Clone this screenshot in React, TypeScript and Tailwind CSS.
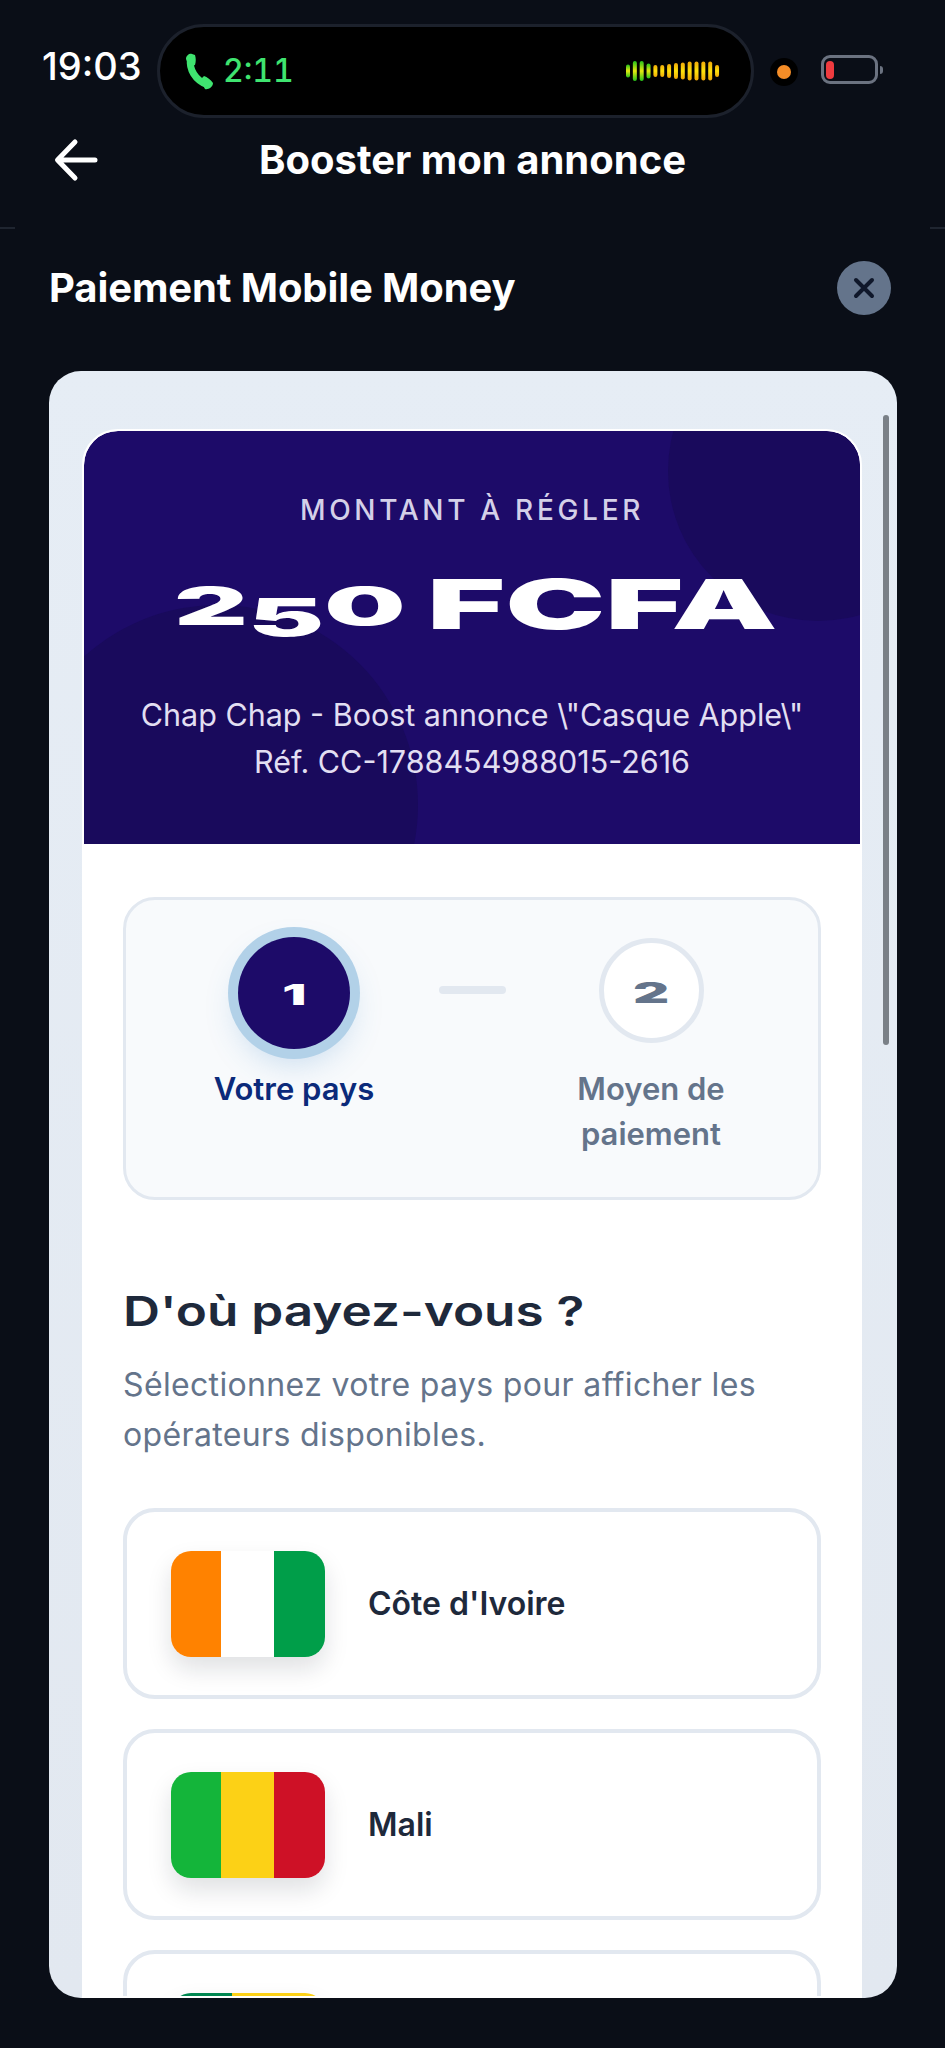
import React from "react";

const bars: [number, boolean][] = [
  [13, true], [20, true], [20, true], [15, true], [12, false], [12, false], [14, false],
  [16, false], [17, false], [19, false], [19, false], [19, false], [19, false], [12, false],
];

function Wave() {
  return (
    <svg width="96" height="24" viewBox="0 0 96 24">
      <defs>
        <linearGradient id="wg" x1="0" y1="0" x2="0" y2="1">
          <stop offset="0" stopColor="#22c21a" />
          <stop offset="0.5" stopColor="#e8e810" />
          <stop offset="1" stopColor="#22c21a" />
        </linearGradient>
        <linearGradient id="wy" x1="0" y1="0" x2="0" y2="1">
          <stop offset="0" stopColor="#f0a808" />
          <stop offset="0.5" stopColor="#fde20c" />
          <stop offset="1" stopColor="#f0a808" />
        </linearGradient>
      </defs>
      {bars.map(([h, g], i) => (
        <rect key={i} x={1 + i * 6.85} y={12 - h / 2} width="4" height={h} rx="2" fill={g ? "url(#wg)" : "url(#wy)"} />
      ))}
    </svg>
  );
}

function Flag({ a, b, c }: { a: string; b: string; c: string }) {
  return (
    <div className="flex h-[106px] w-[154px] shrink-0 overflow-hidden rounded-[20px] shadow-[0_12px_24px_rgba(15,23,42,0.13)]">
      <div className={`h-full w-[50px] ${a}`} />
      <div className={`h-full w-[53px] ${b}`} />
      <div className={`h-full w-[51px] ${c}`} />
    </div>
  );
}

function Benin() {
  return (
    <div className="flex h-[106px] w-[154px] shrink-0 overflow-hidden rounded-[20px] shadow-[0_12px_24px_rgba(15,23,42,0.13)]">
      <div className="h-full w-[61px] bg-[#008751]" />
      <div className="flex h-full flex-1 flex-col">
        <div className="h-[53px] bg-[#fcd116]" />
        <div className="h-[53px] bg-[#e8112d]" />
      </div>
    </div>
  );
}

function Country({ name, flag }: { name?: string; flag: React.ReactNode }) {
  return (
    <div className="flex h-[191px] shrink-0 items-center gap-[43px] rounded-[32px] border-[4px] border-[#e2e8f0] bg-white pl-[44px]">
      {flag}
      {name && <span className="text-[32px] font-semibold text-[#1e293b]">{name}</span>}
    </div>
  );
}

export default function App() {
  return (
    <div className="flex h-[2048px] w-[945px] flex-col overflow-hidden bg-[#0a0e17] text-white [font-family:Inter,'Noto_Sans',sans-serif]">
      {/* status */}
      <div className="flex h-[118px] shrink-0 items-end pl-[42px]">
        <span className="mb-[30px] w-[115px] text-[38px] font-medium leading-[44px]">19:03</span>
        <div className="flex h-[94px] w-[597px] items-center justify-between rounded-full border-[3px] border-[#1c212c] bg-black pl-[25px] pr-[30px]">
          <div className="flex items-center gap-[10px]">
            <svg width="28" height="37" viewBox="0 0 28 37">
              <path d="M5.5 6C4 16 10 27 22 31.5" fill="none" stroke="#3fe470" strokeWidth="7" strokeLinecap="round" />
              <path d="M1 6C1 2 5 0 7 1L10 2C11 5 11 9 10 12L4 14ZM15 27L19 23C22 24 26 27 28 30C28 34 23 37 20 36Z" fill="#3fe470" />
            </svg>
            <span className="text-[32px] font-medium leading-none text-[#3fe470] tabular-nums">2:11</span>
          </div>
          <Wave />
        </div>
        <div className="mb-[32px] ml-[16px] flex h-[28px] w-[28px] items-center justify-center rounded-full bg-black">
          <div className="h-[14px] w-[14px] rounded-full bg-[#f58d27]" />
        </div>
        <div className="mb-[34px] ml-[23px] flex items-center">
          <div className="flex h-[29px] w-[57px] items-center rounded-[9px] border-[3px] border-[#6b7280] pl-[2px]">
            <div className="h-[18px] w-[8px] rounded-[4px] bg-[#ef3b3f]" />
          </div>
          <div className="ml-[2px] h-[8px] w-[3px] rounded-r-full bg-[#6b7280]" />
        </div>
      </div>

      {/* header */}
      <div className="relative flex h-[84px] shrink-0 items-center justify-center">
        <svg className="absolute left-[54px] top-[20px]" width="44" height="44" viewBox="0 0 44 44">
          <path d="M41 22H4M21 4L3.5 22L21 40" fill="none" stroke="#fff" strokeWidth="5" strokeLinecap="round" strokeLinejoin="round" />
        </svg>
        <span className="text-[40px] font-bold">Booster mon annonce</span>
      </div>
      <div className="flex h-[27px] shrink-0 items-end justify-between">
        <div className="h-[2px] w-[15px] bg-[#1f2530]" />
        <div className="h-[2px] w-[15px] bg-[#1f2530]" />
      </div>

      {/* title */}
      <div className="flex h-[142px] shrink-0 items-start justify-between pl-[49px] pr-[54px] pt-[32px]">
        <span className="text-[40px] font-bold leading-[54px] tracking-[-0.1px]">Paiement Mobile Money</span>
        <div className="flex h-[54px] w-[54px] items-center justify-center rounded-full bg-[#64748b]">
          <svg width="24" height="24" viewBox="0 0 24 24">
            <path d="M4 4L20 20M20 4L4 20" stroke="#0f172a" strokeWidth="4" strokeLinecap="round" />
          </svg>
        </div>
      </div>

      {/* card */}
      <div className="relative mx-[49px] h-[1627px] w-[848px] shrink-0 overflow-hidden rounded-[32px] bg-gradient-to-b from-[#e6edf5] to-[#e2e8f0] pl-[33px] pt-[58px]">
        <div className="absolute left-[834px] top-[44px] h-[630px] w-[6px] rounded-full bg-[#7a8087]" />
        <div className="flex h-[1569px] w-[780px] flex-col overflow-hidden rounded-t-[36px] border-[2px] border-white bg-white">
          {/* hero */}
          <div className="relative flex h-[413px] shrink-0 flex-col items-center overflow-hidden rounded-t-[34px] bg-[#1d0b69] text-center">
            <div className="absolute left-[584px] top-[-110px] h-[300px] w-[300px] rounded-full bg-[#190a5c]" />
            <div className="absolute left-[-66px] top-[174px] h-[400px] w-[400px] rounded-full bg-[#190a5c]" />
            <div className="relative mt-[61px] text-[28px] font-medium leading-[36px] tracking-[3.7px] text-[#d4d0e8]">MONTANT À RÉGLER</div>
            <div className="relative mt-[43px] flex h-[62px] w-[597px] items-end gap-[26px] text-left font-black text-white">
              <div className="flex w-[227px] origin-left scale-x-[2.2] items-end text-[52px] leading-[52px]">
                <span>2</span>
                <span className="relative top-[11px]">5</span>
                <span>0</span>
              </div>
              <div className="w-[344px] origin-left scale-x-[1.94] whitespace-nowrap text-[69px] leading-[58px]">FCFA</div>
            </div>
            <div className="relative mt-[58px] text-[30.5px] leading-[47px] text-[#e2dff2]">
              Chap Chap - Boost annonce \"Casque Apple\"
              <br />
              Réf. CC-1788454988015-2616
            </div>
          </div>

          {/* body */}
          <div className="flex flex-col px-[39px] pt-[53px]">
            <div className="flex h-[303px] shrink-0 rounded-[32px] border-[3px] border-[#e2e8f0] bg-[#f8fafc]">
              <div className="w-[313px] pl-[68px] pt-[37px]">
                <div className="flex w-[200px] flex-col items-center">
                  <div className="flex h-[112px] w-[112px] items-center justify-center rounded-full bg-[#1d0b69] shadow-[0_0_0_10px_#b2d1e8,0_14px_32px_rgba(56,130,200,0.25)]">
                    <span className="mt-[4px] scale-x-[1.9] text-[28px] font-black leading-none text-white">1</span>
                  </div>
                  <div className="mt-[17px] whitespace-nowrap text-[31px] font-semibold leading-[45px] text-[#0b2a7a]">Votre pays</div>
                </div>
              </div>
              <div className="mt-[86px] h-[8px] w-[67px] rounded-full bg-[#e2e8f0]" />
              <div className="pl-[45px] pt-[38px]">
                <div className="flex w-[200px] flex-col items-center">
                  <div className="flex h-[105px] w-[105px] items-center justify-center rounded-full border-[5px] border-[#e2e8f0] bg-white">
                    <span className="mt-[4px] scale-x-[2] text-[28px] font-black leading-none text-[#64748b]">2</span>
                  </div>
                  <div className="mt-[23px] w-[190px] text-center text-[31px] font-semibold leading-[45px] text-[#64748b]">Moyen de paiement</div>
                </div>
              </div>
            </div>

            <div className="mt-[86px] origin-left scale-x-[1.25] whitespace-nowrap text-[41px] font-semibold leading-[50px] text-[#1e293b]">D'où payez-vous ?</div>
            <p className="mt-[24px] text-[32px] leading-[50px] tracking-[0.35px] text-[#64748b]">
              Sélectionnez votre pays pour afficher les opérateurs disponibles.
            </p>

            <div className="mt-[48px] flex flex-col gap-[30px]">
              <Country name="Côte d'Ivoire" flag={<Flag a="bg-[#ff8200]" b="bg-white" c="bg-[#009e49]" />} />
              <Country name="Mali" flag={<Flag a="bg-[#14b53a]" b="bg-[#fcd116]" c="bg-[#ce1126]" />} />
              <Country flag={<Benin />} />
            </div>
          </div>
        </div>
      </div>
    </div>
  );
}
